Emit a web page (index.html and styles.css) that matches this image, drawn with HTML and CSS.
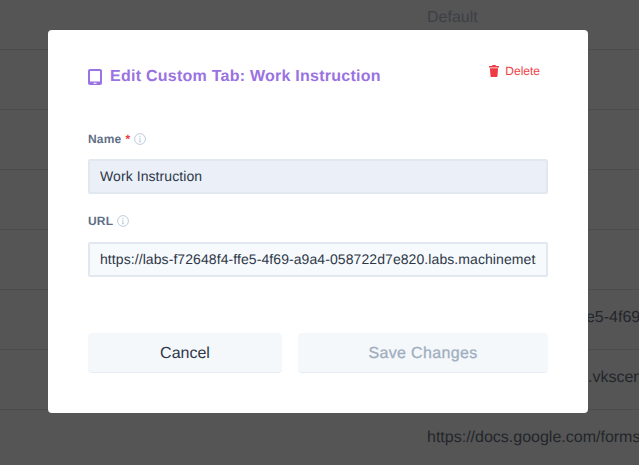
FILE: index.html
```html
<!DOCTYPE html>
<html lang="en">
<head>
<meta charset="utf-8">
<title>Edit Custom Tab</title>
<link rel="stylesheet" href="styles.css">
</head>
<body>
<div class="page">
  <div class="table">
    <div class="row first"><span class="cell muted">Default</span></div>
    <div class="row"></div>
    <div class="row"></div>
    <div class="row"></div>
    <div class="row"></div>
    <div class="row"><span class="cell">https://labs-f72648f4-ffe5-4f69-a9a4-058722d7e820</span></div>
    <div class="row"><span class="cell">https://labs-cad12ci-7b.vkscene.example.com</span></div>
    <div class="row"><span class="cell">https://docs.google.com/forms/d/e/1FAIpQLSc</span></div>
  </div>
  <div class="modal">
    <div class="head">
      <h2 class="title">
        <svg class="tab-icon" viewBox="0 0 14 16" aria-hidden="true"><path fill-rule="evenodd" d="M2 0h10a2 2 0 0 1 2 2v12a2 2 0 0 1-2 2H2a2 2 0 0 1-2-2V2a2 2 0 0 1 2-2zM2 2v10.500h10V2zM5.500 13.800v.9h3v-.9z"/></svg>
        <span>Edit Custom Tab: Work Instruction</span>
      </h2>
      <a class="delete">
        <svg class="trash" viewBox="0 0 11 13" preserveAspectRatio="none" aria-hidden="true"><path d="M3.800 0h3.400l.5 1H11v1.600H0V1h3.300zM1 3.500h9l-.7 8.600a1 1 0 0 1-1 .9H2.700a1 1 0 0 1-1-.9z"/></svg>
        <span>Delete</span>
      </a>
    </div>
    <div class="field name-field">
      <label class="label"><span>Name</span><span class="req">*</span>
        <svg class="info" viewBox="0 0 12 12" aria-hidden="true"><circle cx="6" cy="6" r="5.400"/><path d="M6 5.300v3.200M4.900 8.700h2.200M5 5.300h1"/><circle class="dot" cx="6" cy="3.400" r=".7"/></svg>
      </label>
      <input class="input filled" type="text" value="Work Instruction">
    </div>
    <div class="field url-field">
      <label class="label"><span>URL</span>
        <svg class="info" viewBox="0 0 12 12" aria-hidden="true"><circle cx="6" cy="6" r="5.400"/><path d="M6 5.300v3.200M4.900 8.700h2.200M5 5.300h1"/><circle class="dot" cx="6" cy="3.400" r=".7"/></svg>
      </label>
      <input class="input" type="text" value="https://labs-f72648f4-ffe5-4f69-a9a4-058722d7e820.labs.machinemetrics.com">
    </div>
    <div class="actions">
      <button class="btn cancel" type="button">Cancel</button>
      <button class="btn save" type="button">Save Changes</button>
    </div>
  </div>
</div>
</body>
</html>
```

FILE: styles.css
```css
* { box-sizing: border-box; }
html, body { margin: 0; height: 100%; overflow: hidden; }
body { font-family: "Liberation Sans", Arial, sans-serif; background: #555555; text-rendering: geometricPrecision; }
.page { position: relative; width: 639px; height: 465px; overflow: hidden; }

.table { display: flex; flex-direction: column; margin-top: -10px; }
.row {
  flex: none;
  height: 60px;
  border-bottom: 1px solid #4c4c4c;
  padding: 0 0 4px 427px;
  display: flex;
  align-items: center;
  white-space: nowrap;
  overflow: hidden;
  font-size: 16px;
  color: #23262b;
}
.row:last-child { border-bottom: 0; }
.cell { display: block; }
.muted { color: #3d4045; }

.modal {
  position: absolute;
  left: 48px;
  top: 30px;
  width: 540px;
  height: 383px;
  background: #fff;
  border-radius: 4px;
  padding: 32px 40px 40px;
  display: flex;
  flex-direction: column;
}
.head { display: flex; justify-content: space-between; align-items: flex-start; }
.title {
  margin: 0;
  display: flex;
  align-items: center;
  gap: 8px;
  font-size: 16px;
  line-height: 30px;
  font-weight: 700;
  color: #9a72e2;
  letter-spacing: 0.25px;
}
.tab-icon { width: 14px; height: 16px; fill: #9a72e2; flex: none; }
.delete {
  display: flex;
  align-items: center;
  gap: 6px;
  font-size: 12px;
  line-height: 16px;
  color: #f03e45;
  margin: 1px 8px 0 0;
}
.trash { width: 10px; height: 12px; fill: #ee3a42; }

.field { display: flex; flex-direction: column; }
.name-field { margin-top: 39px; }
.url-field { margin-top: 19px; }
.label {
  display: flex;
  align-items: center;
  gap: 4px;
  font-size: 12px;
  line-height: 16px;
  font-weight: 700;
  color: #5f6f86;
  margin-bottom: 12px;
  letter-spacing: 0.2px;
}
.url-field .label { margin-bottom: 13px; }
.req { color: #f03e45; }
.info { width: 12px; height: 12px; fill: none; stroke: #bcccdc; stroke-width: 1; }
.info .dot { fill: #bcccdc; stroke: none; }
.input {
  width: 460px;
  height: 35px;
  border: 2px solid #e2e8f0;
  border-radius: 2px;
  background: #f7fafc;
  padding: 0 10px 2px;
  font: 14px "Liberation Sans", Arial, sans-serif;
  letter-spacing: 0.08px;
  text-rendering: geometricPrecision;
  color: #2d3748;
  outline: none;
}
.input.filled { background: #ebf0f8; }

.actions { display: flex; gap: 16px; margin-top: auto; }
.btn {
  height: 40px;
  border: 0;
  border-bottom: 1px solid #e8edf3;
  border-radius: 4px;
  background: #f5f8fb;
  font: 16px "Liberation Sans", Arial, sans-serif;
  text-rendering: geometricPrecision;
  padding: 2px 0 0;
}
.cancel { width: 194px; color: #2d3748; }
.save { width: 250px; color: #a0aec0; letter-spacing: 0.35px; -webkit-text-stroke: 0.3px #a0aec0; }
```
